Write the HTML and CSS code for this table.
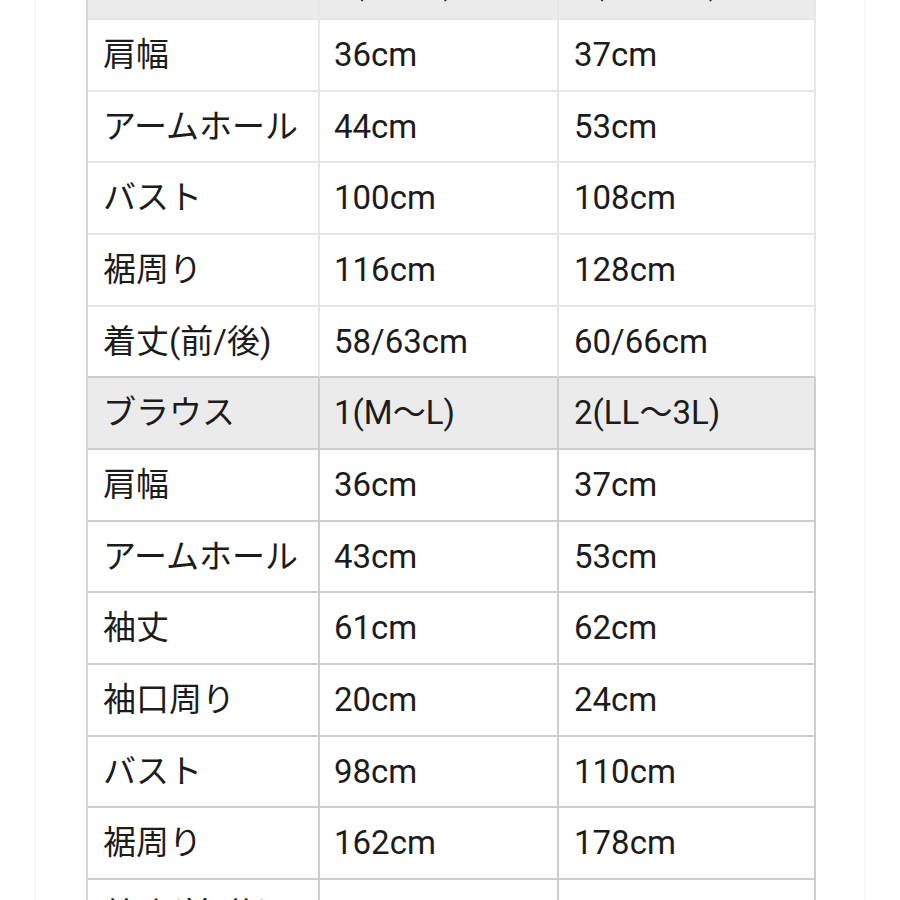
FILE: index.html
```html
<!DOCTYPE html>
<html lang="ja">
<head>
<meta charset="utf-8">
<title>サイズ表</title>
<link rel="stylesheet" href="styles.css">
</head>
<body>
<div class="page">
  <table class="size-table">
    <colgroup>
      <col class="c1"><col class="c2"><col class="c3">
    </colgroup>
    <tbody class="light">
      <tr class="head"><td>ワンピース</td><td>1(M〜L)</td><td>2(LL〜3L)</td></tr>
      <tr><td>肩幅</td><td>36cm</td><td>37cm</td></tr>
      <tr><td>アームホール</td><td>44cm</td><td>53cm</td></tr>
      <tr><td>バスト</td><td>100cm</td><td>108cm</td></tr>
      <tr><td>裾周り</td><td>116cm</td><td>128cm</td></tr>
      <tr><td>着丈(前/後)</td><td>58/63cm</td><td>60/66cm</td></tr>
    </tbody>
    <tbody class="dark">
      <tr class="head"><td>ブラウス</td><td>1(M〜L)</td><td>2(LL〜3L)</td></tr>
      <tr><td>肩幅</td><td>36cm</td><td>37cm</td></tr>
      <tr><td>アームホール</td><td>43cm</td><td>53cm</td></tr>
      <tr><td>袖丈</td><td>61cm</td><td>62cm</td></tr>
      <tr><td>袖口周り</td><td>20cm</td><td>24cm</td></tr>
      <tr><td>バスト</td><td>98cm</td><td>110cm</td></tr>
      <tr><td>裾周り</td><td>162cm</td><td>178cm</td></tr>
      <tr><td>着丈(前/後)</td><td>60/63cm</td><td>62/66cm</td></tr>
    </tbody>
  </table>
</div>
</body>
</html>
```
FILE: styles.css
```css
html, body {
  margin: 0;
  padding: 0;
  background: #ffffff;
}

body {
  font-family: Roboto, "Noto Sans CJK JP", sans-serif;
  color: #1c1c1c;
}

.page {
  display: flow-root;
  margin: 0 36px;
  min-height: 100vh;
  background: #ffffff;
  box-shadow: -1px 0 2px rgba(0, 0, 0, 0.06), 1px 0 3px rgba(0, 0, 0, 0.06);
}

.size-table {
  margin: -53.67px 0 0 50px;
  border-collapse: separate;
  border-spacing: 0;
  table-layout: fixed;
  width: 730px;
  border-left: 2px solid #d6d6d6;
  border-top: 2px solid #e2e2e2;
}

.c1 { width: 232px; }
.c2 { width: 239px; }
.c3 { width: 257px; }

.size-table tr {
  height: 71.67px;
}

.size-table td {
  box-sizing: border-box;
  padding: 0 14px 0 15px;
  font-size: 33px;
  line-height: 1.2;
  vertical-align: middle;
  white-space: nowrap;
  border-right: 2px solid #e6e6e6;
  border-bottom: 2px solid #e6e6e6;
  background: #ffffff;
}

.size-table td:nth-child(2) {
  padding-left: 14px;
}

.dark td {
  border-right-color: #cdcdcd;
  border-bottom-color: #cdcdcd;
}

.light tr:last-child td {
  border-bottom-color: #cdcdcd;
}

.head td {
  background: #ebebeb;
}
```
